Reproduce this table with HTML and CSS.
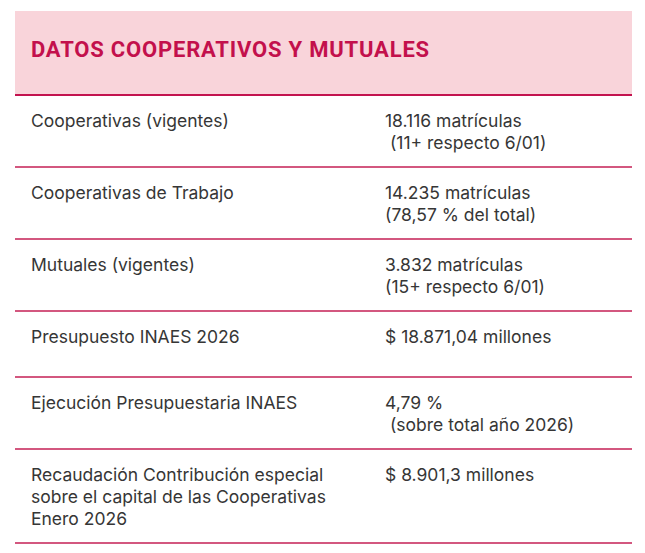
FILE: index.html
```html
<!DOCTYPE html>
<html lang="es">
<head>
<meta charset="utf-8">
<title>Datos cooperativos y mutuales</title>
<link rel="stylesheet" href="styles.css">
</head>
<body>
<section class="card">
  <header class="card-head">
    <h1 class="title">DATOS COOPERATIVOS Y MUTUALES</h1>
  </header>
  <div class="row">
    <div class="label">Cooperativas (vigentes)</div>
    <div class="value">18.116 matrículas<br>&nbsp;(11+ respecto 6/01)</div>
  </div>
  <div class="row">
    <div class="label">Cooperativas de Trabajo</div>
    <div class="value">14.235 matrículas<br>(78,57 % del total)</div>
  </div>
  <div class="row">
    <div class="label">Mutuales (vigentes)</div>
    <div class="value">3.832 matrículas<br>(15+ respecto 6/01)</div>
  </div>
  <div class="row">
    <div class="label">Presupuesto INAES 2026</div>
    <div class="value">$ 18.871,04 millones</div>
  </div>
  <div class="row">
    <div class="label">Ejecución Presupuestaria INAES</div>
    <div class="value">4,79 %<br>&nbsp;(sobre total año 2026)</div>
  </div>
  <div class="row">
    <div class="label">Recaudación Contribución especial<br>sobre el capital de las Cooperativas<br>Enero 2026</div>
    <div class="value">$ 8.901,3 millones</div>
  </div>
</section>
</body>
</html>
```

FILE: styles.css
```css
html, body {
  margin: 0;
  padding: 0;
  background: #ffffff;
}

.card {
  width: 617px;
  margin: 11px 0 0 15px;
  font-family: Inter, "Noto Sans", sans-serif;
  color: #363636;
}

.card-head {
  background: #f9d4da;
  border-bottom: 2px solid #c3134f;
  padding: 26px 16px 31px;
}

.title {
  margin: 0;
  font-family: Roboto, "Liberation Sans", sans-serif;
  font-weight: 700;
  font-size: 22px;
  line-height: 26px;
  letter-spacing: 0.8px;
  color: #c3104c;
}

.row {
  display: grid;
  grid-template-columns: 370px 1fr;
  padding: 14px 0 12px;
  min-height: 38px;
  border-bottom: 2px solid #d3577f;
  font-size: 17.5px;
  line-height: 22px;
}

.label {
  padding-left: 16px;
}
```
